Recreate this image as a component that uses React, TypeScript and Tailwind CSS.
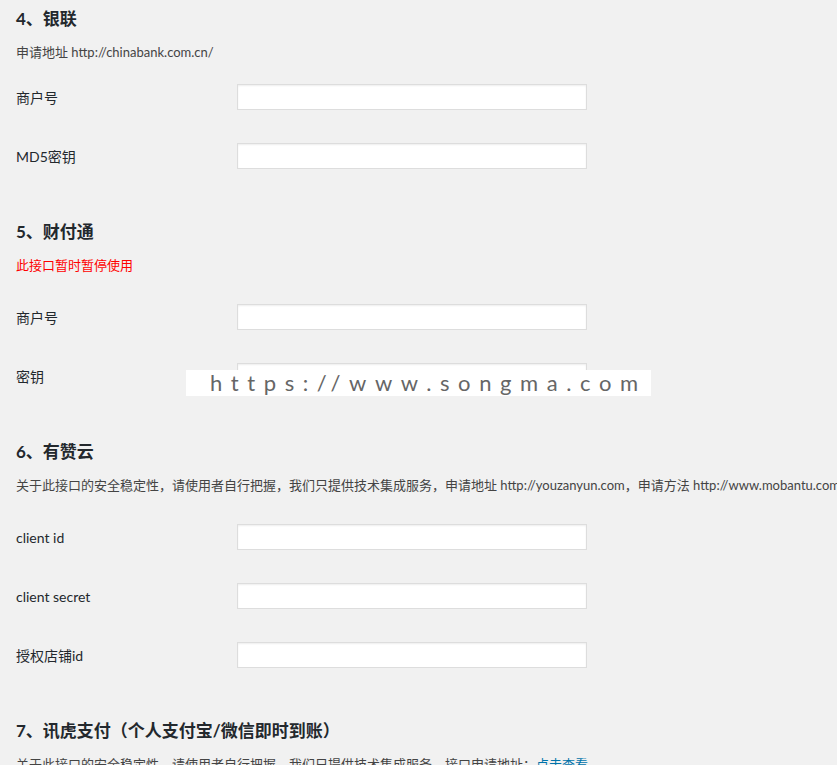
import React from 'react';

interface Field {
  label: string;
}

interface SectionProps {
  title: string;
  desc: React.ReactNode;
  descClass?: string;
  fields: Field[];
  first?: boolean;
}

const FONT = { fontFamily: 'Lato, "Noto Sans CJK SC", sans-serif' };

function Section({ title, desc, descClass, fields, first }: SectionProps) {
  return (
    <div className={first ? 'pt-[7px]' : 'pt-[51px]'}>
      <h2 className="text-[17px] leading-[24px] font-bold text-[#23282d]">{title}</h2>
      <p className={`mt-[11px] text-[13px] leading-[20px] whitespace-nowrap ${descClass ?? 'text-[#444]'}`}>{desc}</p>
      {fields.length > 0 && (
        <div className={`flex flex-col gap-[33px] ${first ? 'mt-[22px]' : 'mt-[29px]'}`}>
          {fields.map((f) => (
            <div key={f.label} className="flex items-center h-[26px]">
              <label className="w-[221px] text-[14px] text-[#23282d]">{f.label}</label>
              <input
                type="text"
                className="w-[350px] h-[26px] bg-white border border-[#ddd] shadow-[inset_0_1px_2px_rgba(0,0,0,0.07)] outline-none"
              />
            </div>
          ))}
        </div>
      )}
    </div>
  );
}

export default function App() {
  return (
    <div className="relative w-[837px] h-[765px] overflow-hidden bg-[#f1f1f1] pl-4" style={FONT}>
      <Section
        first
        title="4、银联"
        desc="申请地址 http://chinabank.com.cn/"
        fields={[{ label: '商户号' }, { label: 'MD5密钥' }]}
      />
      <Section
        title="5、财付通"
        desc="此接口暂时暂停使用"
        descClass="text-[#ff0000]"
        fields={[{ label: '商户号' }, { label: '密钥' }]}
      />
      <Section
        title="6、有赞云"
        desc="关于此接口的安全稳定性，请使用者自行把握，我们只提供技术集成服务，申请地址 http://youzanyun.com，申请方法 http://www.mobantu.com/7191.html"
        fields={[{ label: 'client id' }, { label: 'client secret' }, { label: '授权店铺id' }]}
      />
      <Section
        title="7、讯虎支付（个人支付宝/微信即时到账）"
        desc={
          <>
            关于此接口的安全稳定性，请使用者自行把握，我们只提供技术集成服务，接口申请地址：
            <a className="text-[#0073aa]">点击查看</a>
          </>
        }
        fields={[]}
      />

      {/* watermark */}
      <div className="absolute left-[186px] top-[370px] w-[465px] h-[26px] bg-white flex items-center pl-[24px]">
        <span className="text-[22px] leading-none text-[#666] tracking-[8.6px]">https://www.songma.com</span>
      </div>
    </div>
  );
}
